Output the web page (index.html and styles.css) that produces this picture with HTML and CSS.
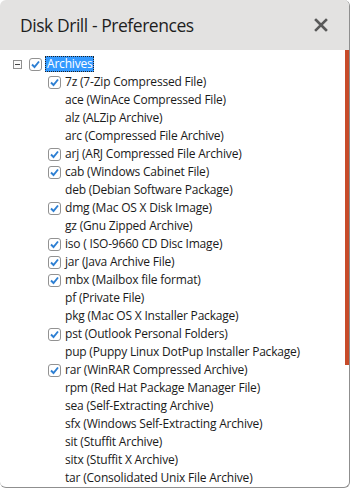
FILE: index.html
```html
<!DOCTYPE html>
<html lang="en">
<head>
    <meta charset="UTF-8">
    <title>Disk Drill - Preferences</title>
    <link rel="stylesheet" href="styles.css">
</head>
<body>

<div class="window">
    <!-- Title bar -->
    <div class="titlebar">
        <span class="title">Disk Drill - Preferences</span>
        <span class="close">
            <svg width="14" height="14" viewBox="0 0 14 14"><path d="M2 2 L12 12 M12 2 L2 12" stroke="#5a5a5a" stroke-width="2.6" stroke-linecap="square"/></svg>
        </span>
    </div>

    <div class="content">
        <div class="tree">
            <div class="row root">
                <span class="expander"></span>
                <span class="check on"></span>
                <span class="label selected">Archives</span>
            </div>
            <div class="children" id="children"></div>
        </div>
        <div class="scroll"><div class="thumb"></div></div>
    </div>
</div>

<script>
    // file types: [name, checked]
    const types = [
        ['7z (7-Zip Compressed File)', true],
        ['ace (WinAce Compressed File)', false],
        ['alz (ALZip Archive)', false],
        ['arc (Compressed File Archive)', false],
        ['arj (ARJ Compressed File Archive)', true],
        ['cab (Windows Cabinet File)', true],
        ['deb (Debian Software Package)', false],
        ['dmg (Mac OS X Disk Image)', true],
        ['gz (Gnu Zipped Archive)', false],
        ['iso ( ISO-9660 CD Disc Image)', true],
        ['jar (Java Archive File)', true],
        ['mbx (Mailbox file format)', true],
        ['pf (Private File)', false],
        ['pkg (Mac OS X Installer Package)', false],
        ['pst (Outlook Personal Folders)', true],
        ['pup (Puppy Linux DotPup Installer Package)', false],
        ['rar (WinRAR Compressed Archive)', true],
        ['rpm (Red Hat Package Manager File)', false],
        ['sea (Self-Extracting Archive)', false],
        ['sfx (Windows Self-Extracting Archive)', false],
        ['sit (Stuffit Archive)', false],
        ['sitx (Stuffit X Archive)', false],
        ['tar (Consolidated Unix File Archive)', false]
    ];

    const list = document.getElementById('children');
    types.forEach(([name, checked]) => {
        const row = document.createElement('div');
        row.className = 'row';
        const box = document.createElement('span');
        box.className = checked ? 'check on' : 'check off';
        const label = document.createElement('span');
        label.className = 'label';
        label.textContent = name;
        row.appendChild(box);
        row.appendChild(label);
        list.appendChild(row);
    });
</script>

</body>
</html>
```

FILE: styles.css
```css
/* Page */
body {
    margin: 0;
    padding: 0;
    background-color: #ffffff;
    font-family: "Open Sans", "Noto Sans", sans-serif;
}

.window {
    width: 349px;
    height: 487px;
    border-right: 1px solid #8f8f8f;
    border-bottom: 1px solid #8f8f8f;
    border-radius: 6px;
    overflow: hidden;
    display: flex;
    flex-direction: column;
    background-color: #fff;
}

/* Title bar */
.titlebar {
    height: 50px;
    flex-shrink: 0;
    background-color: #e3e2e1;
    display: flex;
    align-items: center;
    justify-content: space-between;
    padding: 0 20px 0 20px;
}

.title {
    font-size: 17.5px;
    color: #1e1e1e;
    letter-spacing: -0.45px;
}

.close {
    display: flex;
    margin-right: 1px;
}

/* Content area */
.content {
    flex: 1;
    display: flex;
}

.tree {
    flex: 1;
    padding-top: 5px;
    padding-left: 13px;
}

.scroll {
    width: 4px;
}

.thumb {
    height: 315px;
    background-color: #c74b2a;
}

/* Tree rows */
.row {
    height: 18px;
    display: flex;
    align-items: center;
    font-size: 12px;
    color: #1a1a1a;
    letter-spacing: -0.2px;
}

.children .row {
    padding-left: 35px;
}

.expander {
    width: 7px;
    height: 7px;
    border: 1px solid #8e8e8e;
    margin-right: 7px;
    position: relative;
    background-color: #fbfbfb;
}

.expander::after {
    content: "";
    position: absolute;
    left: 1px;
    top: 3px;
    width: 5px;
    height: 1px;
    background-color: #444;
}

.check {
    width: 11px;
    height: 11px;
    border: 1px solid #929292;
    border-radius: 3px;
    margin-right: 3px;
    flex-shrink: 0;
}

.check.on {
    background: url("data:image/svg+xml,%3Csvg xmlns='http://www.w3.org/2000/svg' width='11' height='11'%3E%3Cpath d='M2 5.5 L4.5 8 L9 2.5' fill='none' stroke='%232d7fd3' stroke-width='1.9'/%3E%3C/svg%3E") no-repeat center;
}

.check.off {
    visibility: hidden;
}

.label {
    padding: 0 1px;
    line-height: 16px;
    white-space: nowrap;
}

.label.selected {
    padding: 0 2px;
    background-color: #3399ff;
    color: #fff;
    outline: 1px dotted #222;
    outline-offset: -1px;
}
```
